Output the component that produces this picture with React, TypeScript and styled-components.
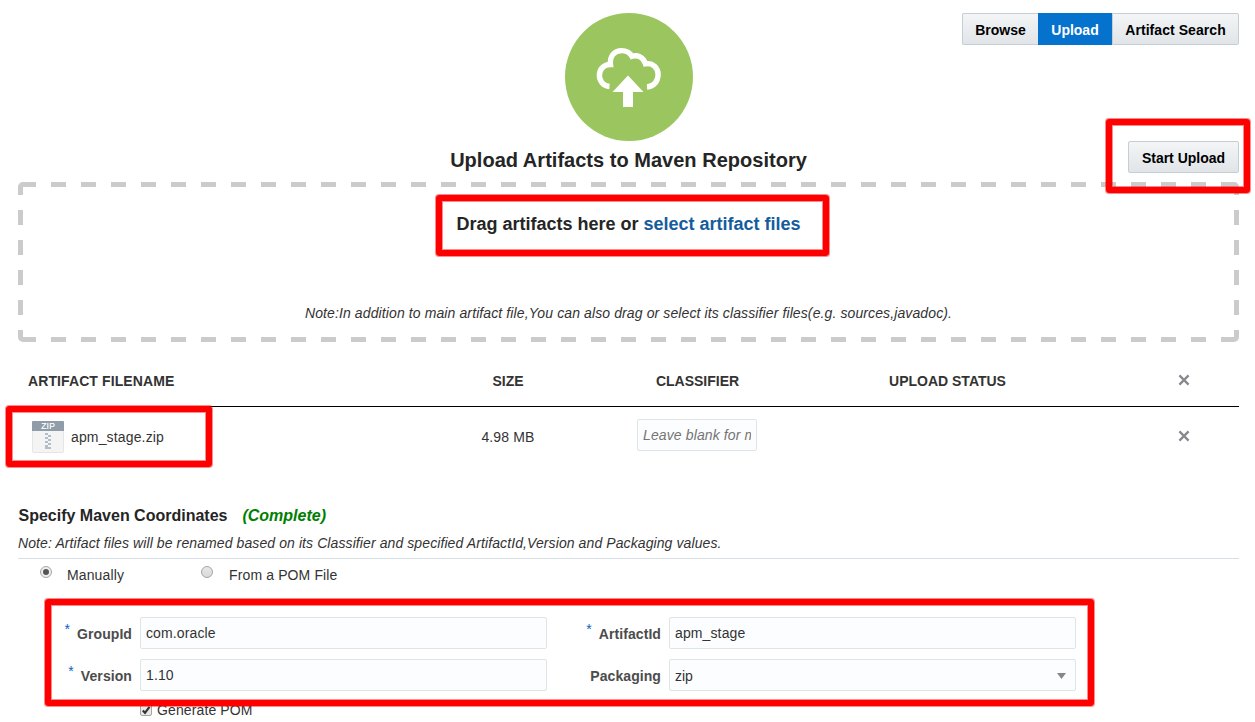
import React from "react";
import styled, { createGlobalStyle, css } from "styled-components";

const Global = createGlobalStyle`
  html, body { margin: 0; background: #fff; overflow: hidden; }
  * { box-sizing: border-box; }
  body, input, button { font-family: "Liberation Sans", Arial, sans-serif; font-size: 14px; color: #333; }
`;

const Page = styled.main`
  position: relative;
  width: 1255px;
  height: 722px;
  overflow: hidden;
  padding: 13px 16px 0 18px;
  white-space: nowrap;
`;

const Header = styled.header`
  display: grid;
  grid-template-columns: 1fr 357px 1fr;
  height: 169px;
`;

const Hero = styled.div`
  grid-column: 2;
  display: flex;
  flex-direction: column;
  align-items: center;
`;

const Title = styled.h1`
  margin: 7px 0 0;
  font-size: 20px;
  line-height: 24px;
  letter-spacing: 0.02px;
  color: #252525;
`;

const Actions = styled.div`
  display: flex;
  flex-direction: column;
  align-items: flex-end;
  gap: 96px;
`;

const raised = css`
  border: 1px solid #c4ced7;
  background: linear-gradient(#f3f5f6, #e1e5e8);
  color: #000;
`;

const Nav = styled.nav`
  display: flex;
`;

const Button = styled.button<{ $width: number }>`
  ${raised}
  width: ${(p) => p.$width}px;
  height: 32px;
  padding: 2px 0 0;
  border-radius: 2px;
  font-weight: bold;
  text-align: center;
`;

const Tab = styled(Button)<{ $active?: boolean; $edge?: "left" | "right" }>`
  border-radius: ${(p) => (p.$edge === "left" ? "2px 0 0 2px" : p.$edge === "right" ? "0 2px 2px 0" : "0")};
  ${(p) => p.$edge === "left" && "border-right: 0;"}
  ${(p) => p.$edge === "right" && "letter-spacing: 0.06px;"}
  ${(p) => p.$active && "background: #0572ce; border-color: #0572ce; color: #fff;"}
`;

const DropZone = styled.section`
  --dash: #cbcbcb;
  display: flex;
  flex-direction: column;
  align-items: center;
  height: 160px;
  padding-top: 30px;
  border-radius: 5px;
  background:
    linear-gradient(var(--dash), var(--dash)) 0 0 / 5px 5px no-repeat,
    linear-gradient(var(--dash), var(--dash)) 100% 0 / 5px 5px no-repeat,
    linear-gradient(var(--dash), var(--dash)) 0 100% / 5px 5px no-repeat,
    linear-gradient(var(--dash), var(--dash)) 100% 100% / 5px 5px no-repeat,
    linear-gradient(90deg, var(--dash) 15px, transparent 15px) 3px 0 / 30px 5px repeat-x,
    linear-gradient(90deg, var(--dash) 15px, transparent 15px) 3px 100% / 30px 5px repeat-x,
    linear-gradient(var(--dash) 15px, transparent 15px) 0 -2px / 5px 30px repeat-y,
    linear-gradient(var(--dash) 15px, transparent 15px) 100% -2px / 5px 30px repeat-y;
`;

const DropTitle = styled.h2`
  margin: 0;
  font-size: 18px;
  line-height: 24px;
  color: #252525;
`;

const Link = styled.a`
  color: #145c9e;
`;

const DropNote = styled.p`
  margin: 67px 0 0;
  font-style: italic;
  line-height: 20px;
  letter-spacing: 0.11px;
`;

const columns = css`
  display: grid;
  grid-template-columns: 368px 244px 135px 365px 108px;
  align-items: center;
`;

const HeadRow = styled.div`
  ${columns}
  height: 65px;
  padding-top: 14px;
  border-bottom: 1px solid #000;
  font-weight: bold;
`;

const HeadName = styled.span`
  letter-spacing: 0.1px;
`;

const HeadCross = styled.span`
  display: flex;
  padding-bottom: 2px;
`;

const Row = styled.div`
  ${columns}
  height: 57px;
`;

const Cell = styled.div<{ $left?: number }>`
  display: flex;
  align-items: center;
  justify-content: ${(p) => (p.$left ? "flex-start" : "center")};
  padding-left: ${(p) => p.$left ?? 0}px;
`;

const FileIcon = styled.span`
  display: flex;
  padding-top: 2px;
`;

const FileName = styled.span`
  margin: 2px 0 0 7px;
  letter-spacing: 0.15px;
`;

const Size = styled.span`
  margin-top: 2px;
  letter-spacing: 0.15px;
`;

const Input = styled.input`
  height: 32px;
  width: 100%;
  padding: 0 5px;
  border: 1px solid #dfe4e7;
  border-radius: 2px;
  background: #fcfdfe;
  outline: 0;
  letter-spacing: 0.12px;
  &::placeholder { color: #757575; font-style: italic; opacity: 1; }
`;

const Classifier = styled(Input)`
  width: 120px;
  margin: 0 1px 2px 0;
`;

const SectionTitle = styled.h2`
  display: flex;
  gap: 15px;
  margin: 41px 0 0;
  padding-left: 0.5px;
  font-size: 16px;
  line-height: 22px;
  color: #252525;
`;

const Complete = styled.em`
  color: #008000;
`;

const SectionNote = styled.p`
  margin: 6px 0 0;
  height: 26px;
  line-height: 20px;
  border-bottom: 1px solid #d6dfe6;
  font-style: italic;
  letter-spacing: 0.095px;
`;

const Modes = styled.div`
  display: flex;
  height: 32px;
  padding: 6px 0 0 21px;
`;

const Mode = styled.label<{ $width: number; $gap: number }>`
  display: flex;
  width: ${(p) => p.$width}px;
  gap: ${(p) => p.$gap}px;
  line-height: 20px;
  letter-spacing: 0.13px;
`;

const Fields = styled.div`
  display: grid;
  grid-template-columns: 407px 407px;
  column-gap: 122px;
  row-gap: 10px;
  margin: 26px 0 0 122px;
`;

const Field = styled.label`
  display: flex;
  justify-content: flex-end;
  align-items: center;
  margin-left: -100px;
`;

const Label = styled.span`
  display: flex;
  gap: 7px;
  margin: 2px 8px 0 0;
  font-weight: bold;
  letter-spacing: 0.08px;
  color: #4c4c4c;
`;

const Required = styled.span`
  margin-top: -5px;
  font-weight: normal;
  color: #0a62c4;
`;

const FieldInput = styled(Input)`
  flex: 0 0 407px;
`;

const SelectBox = styled.span`
  display: flex;
  flex: 0 0 407px;
  height: 32px;
  align-items: center;
  justify-content: space-between;
  padding: 2px 9px 0 5px;
  border: 1px solid #dfe4e7;
  border-radius: 2px;
  background: #fcfdfe;
`;

const Generate = styled.label`
  display: flex;
  gap: 5px;
  margin: 9px 0 0 122px;
  line-height: 20px;
  letter-spacing: 0.12px;
`;

const Callout = styled.div<{ $x: number; $y: number; $w: number; $h: number }>`
  position: absolute;
  left: ${(p) => p.$x}px;
  top: ${(p) => p.$y}px;
  width: ${(p) => p.$w}px;
  height: ${(p) => p.$h}px;
  border: 6px solid #f00;
  border-radius: 3px;
  box-shadow: 0 0 0 1px rgba(255, 0, 0, 0.45), inset 0 0 0 1px rgba(255, 0, 0, 0.45);
  pointer-events: none;
`;

const CloudUpload = () => (
  <svg width="128" height="128" viewBox="0 0 128 128">
    <circle cx="64" cy="64" r="64" fill="#9bc65f" />
    <path
      d="M44.5 73.500 C38 73 34.400 67.500 34.400 62.500 C34.400 56 39 51.300 45.500 51.500 C44.500 43 49.500 37.600 56.500 37.600 C61.500 37.600 65 39.800 67 43.300 C72.500 41.500 78.500 44 80.500 50.800 C88 49.500 93.100 55 93.100 61.500 C93.100 68 89 73.500 82 74"
      fill="none" stroke="#fff" strokeWidth="5.400"
    />
    <path d="M63 62.500 L78.500 79 H68 V94 H58 V79 H47.500 Z" fill="#fff" />
  </svg>
);

const ZipIcon = () => (
  <svg width="32" height="32" viewBox="0 0 32 32">
    <rect x="0.5" y="0.5" width="31" height="31" rx="1" fill="#f4f4f4" stroke="#e4e5e6" />
    <path d="M0 10 V1 Q0 0 1 0 H31 Q32 0 32 1 V10 Z" fill="#909da8" />
    <text x="16.200" y="8" textAnchor="middle" fontSize="8.500" letterSpacing="0.300" stroke="#fff" strokeWidth="0.200" fill="#fff">ZIP</text>
    <path d="M13 12h3v2h-3z M16 14h3v2h-3z M13 16h3v2h-3z M16 18h3v2h-3z M13 20h3v2h-3z M16 22h3v2h-3z M13 24h3v2h3v2h-6z" fill="#b4bec8" />
  </svg>
);

const Cross = () => (
  <svg width="12" height="12" viewBox="0 0 12 12">
    <path d="M1.400 1.400 L10.600 10.600 M10.600 1.400 L1.400 10.600" stroke="#868a8e" strokeWidth="2.300" />
  </svg>
);

const Radio = ({ on }: { on?: boolean }) => (
  <svg width="14" height="14" viewBox="0 0 14 14">
    <defs>
      <linearGradient id="radio" x2="0" y2="1">
        <stop stopColor="#e8e8e8" />
        <stop offset="1" stopColor="#d9d9d9" />
      </linearGradient>
    </defs>
    <circle cx="7" cy="7" r="5.500" fill={on ? "#efefef" : "url(#radio)"} stroke="#a6a6a6" />
    {on && <circle cx="7" cy="7" r="3" fill="#555" />}
  </svg>
);

const Checkbox = () => (
  <svg width="12" height="20" viewBox="0 0 12 20">
    <rect x="0.5" y="4.500" width="11" height="11" rx="1.500" fill="#e8e8e8" stroke="#a6a6a6" />
    <path d="M2.800 10.500 L5 12.800 L9.500 6.800" fill="none" stroke="#333" strokeWidth="2.200" />
  </svg>
);

const Arrow = () => (
  <svg width="9" height="6" viewBox="0 0 9 6">
    <path d="M0 0 H9 L4.500 6 Z" fill="#83888c" />
  </svg>
);

export default function App() {
  return (
    <Page>
      <Global />
      <Header>
        <Hero>
          <CloudUpload />
          <Title>Upload Artifacts to Maven Repository</Title>
        </Hero>
        <Actions>
          <Nav>
            <Tab $width={76} $edge="left">Browse</Tab>
            <Tab $width={74} $active>Upload</Tab>
            <Tab $width={127} $edge="right">Artifact Search</Tab>
          </Nav>
          <Button $width={111}>Start Upload</Button>
        </Actions>
      </Header>

      <DropZone>
        <DropTitle>
          Drag artifacts here or <Link>select artifact files</Link>
        </DropTitle>
        <DropNote>
          Note:In addition to main artifact file,You can also drag or select its classifier files(e.g. sources,javadoc).
        </DropNote>
      </DropZone>

      <HeadRow>
        <Cell $left={10}><HeadName>ARTIFACT FILENAME</HeadName></Cell>
        <Cell>SIZE</Cell>
        <Cell>CLASSIFIER</Cell>
        <Cell>UPLOAD STATUS</Cell>
        <Cell><HeadCross><Cross /></HeadCross></Cell>
      </HeadRow>
      <Row>
        <Cell $left={14}>
          <FileIcon><ZipIcon /></FileIcon>
          <FileName>apm_stage.zip</FileName>
        </Cell>
        <Cell><Size>4.98 MB</Size></Cell>
        <Cell><Classifier placeholder="Leave blank for main" /></Cell>
        <Cell />
        <Cell><Cross /></Cell>
      </Row>

      <SectionTitle>
        Specify Maven Coordinates <Complete>(Complete)</Complete>
      </SectionTitle>
      <SectionNote>
        Note: Artifact files will be renamed based on its Classifier and specified ArtifactId,Version and Packaging values.
      </SectionNote>
      <Modes>
        <Mode $width={161} $gap={14}><Radio on />Manually</Mode>
        <Mode $width={200} $gap={15}><Radio />From a POM File</Mode>
      </Modes>
      <Fields>
        <Field>
          <Label><Required>*</Required>GroupId</Label>
          <FieldInput defaultValue="com.oracle" />
        </Field>
        <Field>
          <Label><Required>*</Required>ArtifactId</Label>
          <FieldInput defaultValue="apm_stage" />
        </Field>
        <Field>
          <Label><Required>*</Required>Version</Label>
          <FieldInput defaultValue="1.10" />
        </Field>
        <Field>
          <Label>Packaging</Label>
          <SelectBox>zip<Arrow /></SelectBox>
        </Field>
      </Fields>
      <Generate><Checkbox />Generate POM</Generate>

      <Callout $x={1106} $y={119} $w={144} $h={74} />
      <Callout $x={436} $y={195} $w={393} $h={61} />
      <Callout $x={6} $y={406} $w={206} $h={61} />
      <Callout $x={45} $y={599} $w={1049} $h={107} />
    </Page>
  );
}
